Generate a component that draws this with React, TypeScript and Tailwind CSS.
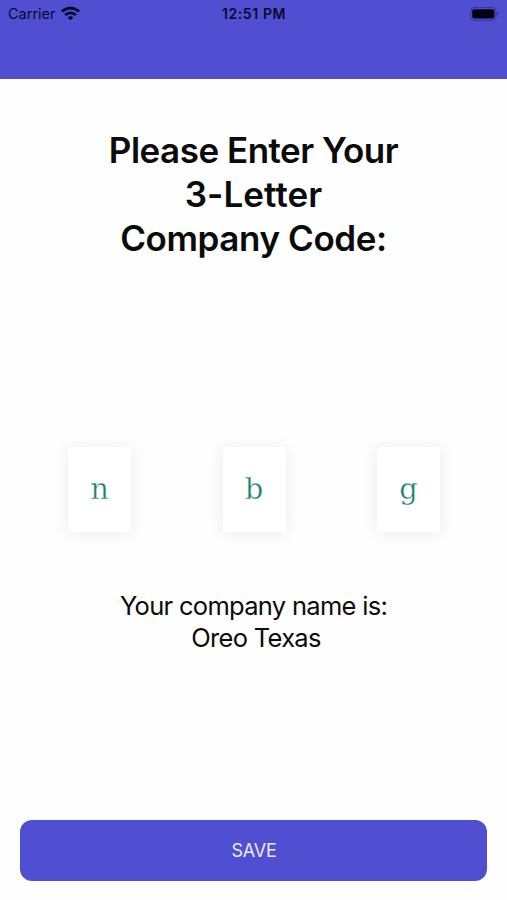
import React from 'react';

interface CodeBoxProps {
  letter: string;
}

const WifiIcon: React.FC = () => (
  <svg width="19" height="15" viewBox="0 0 18 14" fill="none" stroke="#05052b" strokeWidth="2.6">
    <path d="M0.9 5.1C5.4 0.7 12.6 0.7 17.1 5.1" />
    <path d="M3.9 8.4C6.8 5.6 11.2 5.6 14.1 8.4" />
    <path d="M6.4 10.7C7.9 9.3 10.1 9.3 11.6 10.7L9 13.4Z" fill="#05052b" stroke="none" />
  </svg>
);

const BatteryIcon: React.FC = () => (
  <svg width="30" height="14" viewBox="0 0 30 14">
    <rect x="0.6" y="0.6" width="25.4" height="12.6" rx="3.4" fill="none" stroke="#3532a0" strokeWidth="1" />
    <rect x="2.2" y="2.2" width="22.2" height="9.4" rx="2" fill="#020210" />
    <path d="M27.3 4.8C29.1 5.4 29.1 8.4 27.3 9Z" fill="#3532a0" />
  </svg>
);

const StatusBar: React.FC = () => (
  <div className="flex h-[27px] items-center justify-between pl-[8px] pr-[7px] text-[#08082e]">
    <div className="flex flex-1 items-center gap-[5px]">
      <span className="pt-px text-[14.5px] leading-none">Carrier</span>
      <WifiIcon />
    </div>
    <span className="whitespace-nowrap text-[14px] font-semibold leading-none tracking-[0.6px]">12:51 PM</span>
    <div className="flex flex-1 justify-end">
      <BatteryIcon />
    </div>
  </div>
);

const CodeBox: React.FC<CodeBoxProps> = ({ letter }) => (
  <div className="flex h-[85px] w-[63px] items-center justify-center rounded-[4px] bg-white shadow-[0_1px_16px_rgba(20,50,50,0.085)]">
    {/* white stroke thins the slab letters */}
    <span className="font-['DejaVu_Serif',serif] text-[29px] leading-none text-[#1b7f76] [-webkit-text-stroke:0.35px_white]">
      {letter}
    </span>
  </div>
);

export default function App() {
  const code = ['n', 'b', 'g'];

  return (
    <div className="flex h-[900px] w-[507px] flex-col overflow-hidden bg-[#fefefe] font-['Inter',sans-serif] text-[#0b0b0b]">
      <header className="h-[79px] shrink-0 bg-[#514fd1]">
        <StatusBar />
      </header>

      <h1 className="mt-[49px] text-center text-[35px] font-semibold leading-[44px] tracking-[-0.5px]">
        Please Enter Your
        <br />
        <span className="tracking-[0.1px]">3-Letter</span>
        <br />
        <span className="tracking-[-0.4px]">Company Code:</span>
      </h1>

      <div className="mt-[187px] flex justify-between pl-[68px] pr-[67px]">
        {code.map((letter) => (
          <CodeBox key={letter} letter={letter} />
        ))}
      </div>

      <p className="mt-[58px] text-center text-[25.5px] leading-[32px] tracking-[-0.7px]">
        Your company name is:
        <br />
        <span className="pl-[5px]">Oreo Texas</span>
      </p>

      <button className="mx-5 mb-[19px] mt-auto h-[61px] rounded-[12px] bg-[#514fd1] pl-px text-[18px] tracking-[-0.2px] text-[#e9e9fb]">
        SAVE
      </button>
    </div>
  );
}
